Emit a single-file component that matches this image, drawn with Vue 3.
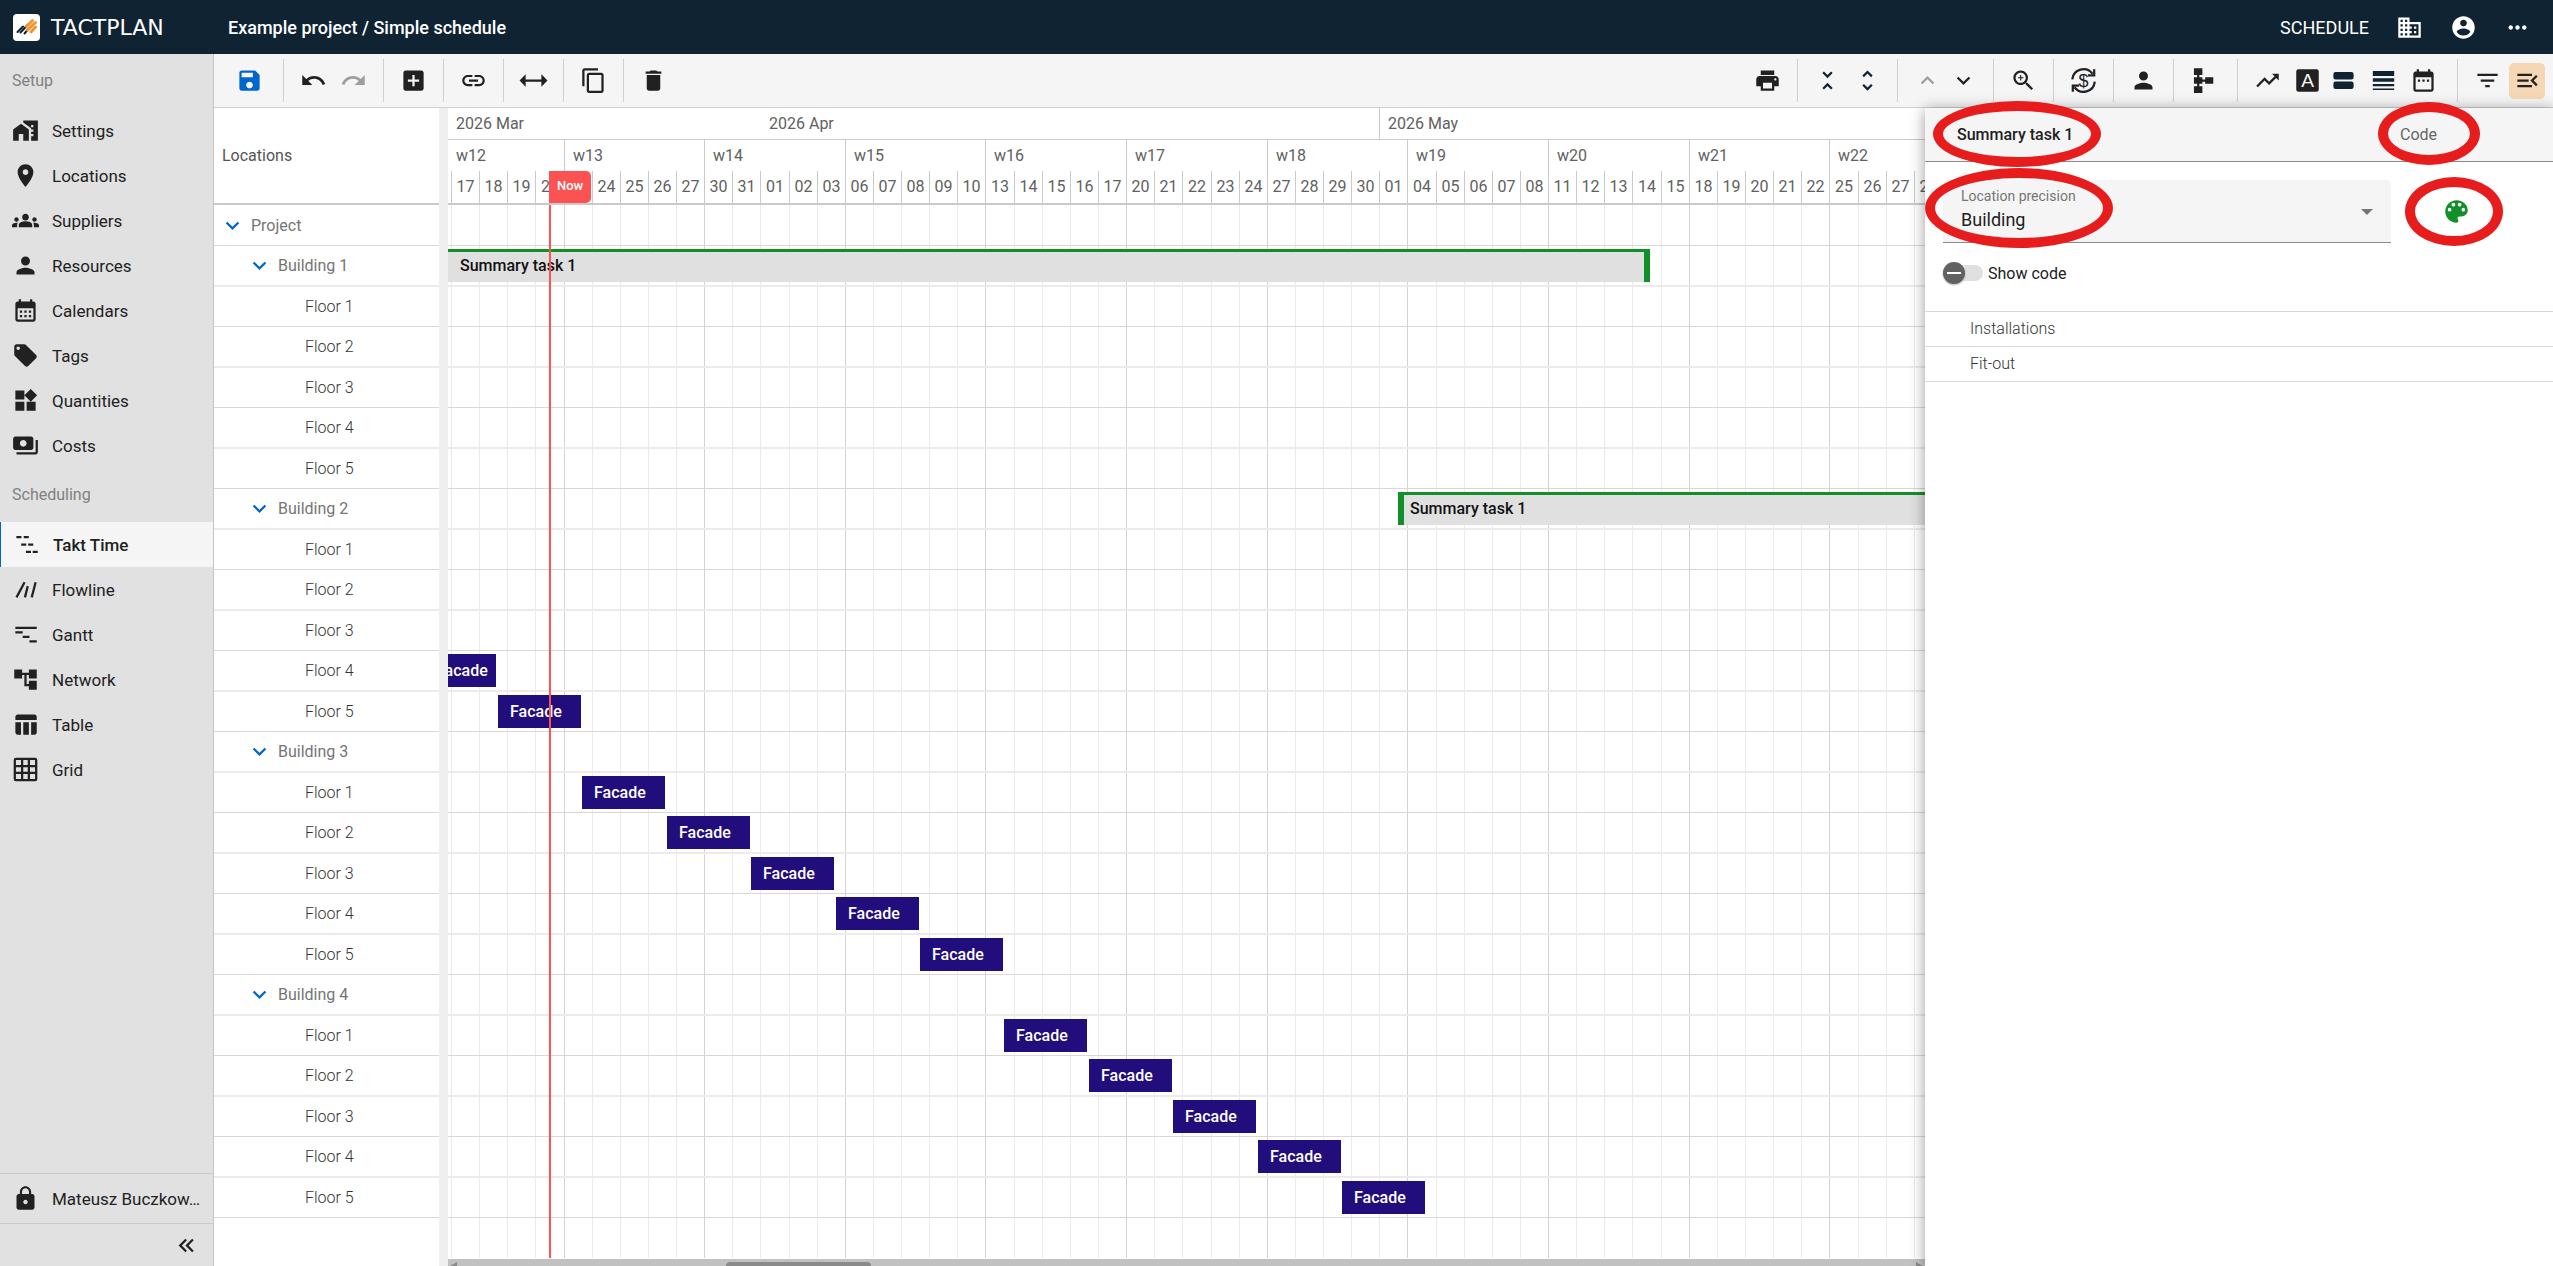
<template>
  <div class="app">
    <header class="topbar">
      <a href="#" class="brand">
        <svg class="brand-mark" viewBox="0 0 27 27" aria-hidden="true">
          <rect width="27" height="27" rx="4" fill="#fff" />
          <g fill="none" stroke-linecap="round" stroke-width="2">
            <path d="M4.5 18L10 12.500M7.500 18.500L15 10.500M11.500 19.500L14.500 16" stroke="#0f2333" />
            <path d="M13.500 12.500L19.500 6.500M14.500 16L22.500 8.500M18 18L22.500 13" stroke="#f2952f" stroke-width="3" />
          </g>
        </svg>
        <span class="brand-name">TACTPLAN</span>
      </a>
      <h1 class="title">Example project / Simple schedule</h1>
      <nav class="top-actions">
        <a href="#" class="schedule-link">SCHEDULE</a>
        <button v-for="name in ['business', 'account', 'dots']" :key="name" class="top-btn" :aria-label="name">
          <svg class="icon" viewBox="0 0 24 24"><path :d="icons[name]" /></svg>
        </button>
      </nav>
    </header>

    <div class="body">
      <aside class="sidebar">
        <nav class="menu">
          <template v-for="section in sections" :key="section.title">
            <h2 class="menu-title">{{ section.title }}</h2>
            <a
              v-for="item in section.items"
              :key="item.label"
              href="#"
              class="menu-item"
              :class="{ active: item.active }"
            >
              <svg class="icon" :class="{ lined: item.lined }" viewBox="0 0 24 24"><path :d="icons[item.icon]" /></svg>
              <span>{{ item.label }}</span>
            </a>
          </template>
        </nav>
        <a href="#" class="user">
          <svg class="icon" viewBox="0 0 24 24"><path :d="icons.lock" /></svg>
          <span class="user-name">Mateusz Buczkow…</span>
        </a>
        <div class="collapse">
          <button class="collapse-btn" aria-label="Collapse menu">
            <svg class="icon" viewBox="0 0 24 24"><path :d="icons.doubleLeft" /></svg>
          </button>
        </div>
      </aside>

      <main class="main">
        <div class="toolbar">
          <div v-for="(side, s) in toolbar" :key="s" class="toolbar-side">
            <div v-for="(group, g) in side" :key="g" class="tool-group" :class="group.kind">
              <button
                v-for="tool in group.tools"
                :key="tool.icon"
                class="tool"
                :class="tool.state"
                :aria-label="tool.icon"
                :disabled="tool.disabled"
              >
                <svg v-if="tool.icon === 'font'" class="icon" viewBox="0 0 24 24">
                  <rect x="2" y="2" width="20" height="20" rx="2" />
                  <text x="12" y="18" class="glyph-a">A</text>
                </svg>
                <svg v-else-if="tool.icon === 'currency'" class="icon" viewBox="0 0 24 24">
                  <path d="M2 11A10 10 0 0 1 20 6M22 13A10 10 0 0 1 4 18" class="arc" />
                  <path d="M22.500 2v6.500H16v-2h4.500V2zM1.500 22v-6.500H8v2H3.500V22z" />
                  <text x="12" y="17.500" class="glyph-s">$</text>
                </svg>
                <svg v-else class="icon" viewBox="0 0 24 24"><path :d="icons[tool.icon]" /></svg>
              </button>
            </div>
          </div>
        </div>

        <div class="workspace">
          <section class="tree">
            <div class="tree-header">Locations</div>
            <div class="rows">
              <div v-for="row in rows" :key="row.id" class="row tree-row" :class="'level-' + row.level">
                <button v-if="row.level < 2" class="toggle" aria-label="Toggle">
                  <svg class="chevron" viewBox="0 0 24 24"><path :d="icons.down" /></svg>
                </button>
                <span>{{ row.name }}</span>
              </div>
            </div>
          </section>

          <div class="splitter"></div>

          <section class="chart">
            <div class="chart-header">
              <div class="scale months">
                <span
                  v-for="m in months"
                  :key="m.label"
                  class="month"
                  :class="{ open: m.open }"
                  :style="{ width: m.width + 'px' }"
                >{{ m.label }}</span>
              </div>
              <div class="scale weeks">
                <span v-for="w in weeks" :key="w.label" class="week" :style="{ width: w.width + 'px' }">{{ w.label }}</span>
              </div>
              <div class="scale days">
                <span v-for="d in days" :key="d.index" class="day" :style="{ width: d.width + 'px' }">{{ d.label }}</span>
              </div>
              <span class="now" :style="{ left: nowX + 'px' }">Now</span>
            </div>

            <div class="chart-body">
              <div class="columns">
                <span
                  v-for="d in days"
                  :key="d.index"
                  class="column"
                  :class="{ 'week-end': d.weekEnd }"
                  :style="{ width: d.width + 'px' }"
                ></span>
              </div>
              <div class="rows">
                <div v-for="row in rows" :key="row.id" class="row">
                  <div
                    v-if="row.bar"
                    class="bar"
                    :class="row.bar.kind"
                    :style="{ left: row.bar.left + 'px', width: row.bar.width + 'px' }"
                  >{{ row.bar.label }}</div>
                </div>
              </div>
              <div class="now-line" :style="{ left: nowX + 'px' }"></div>
            </div>

            <div class="scrollbar">
              <span class="arrow-left"></span>
              <div class="scroll-track"><div class="thumb"></div></div>
              <span class="arrow-right"></span>
            </div>
          </section>

          <aside class="panel">
            <div class="panel-header">
              <input v-model="taskName" class="name-input" aria-label="Name" />
              <input v-model="code" class="code-input" placeholder="Code" aria-label="Code" />
            </div>
            <div class="panel-fields">
              <div class="select-field">
                <label for="precision">Location precision</label>
                <select id="precision" v-model="precision">
                  <option>Project</option>
                  <option>Building</option>
                  <option>Floor</option>
                </select>
              </div>
              <button class="palette" aria-label="Color">
                <svg class="icon" viewBox="0 0 24 24"><path :d="icons.palette" /></svg>
              </button>
            </div>
            <label class="switch" for="show-code">
              <input id="show-code" v-model="showCode" type="checkbox" />
              <span>Show code</span>
            </label>
            <ul class="subtasks">
              <li v-for="task in subtasks" :key="task">{{ task }}</li>
            </ul>
            <span class="mark mark-name"></span>
            <span class="mark mark-code"></span>
            <span class="mark mark-precision"></span>
            <span class="mark mark-palette"></span>
          </aside>
        </div>
      </main>
    </div>
  </div>
</template>

<script setup>
import { ref } from 'vue'

const taskName = ref('Summary task 1')
const code = ref('')
const precision = ref('Building')
const showCode = ref(false)
const subtasks = ['Installations', 'Fit-out']

const icons = {
  business: 'M12 7V3H2v18h20V7H12zM6 19H4v-2h2v2zm0-4H4v-2h2v2zm0-4H4V9h2v2zm0-4H4V5h2v2zm4 12H8v-2h2v2zm0-4H8v-2h2v2zm0-4H8V9h2v2zm0-4H8V5h2v2zm10 12h-8v-2h2v-2h-2v-2h2v-2h-2V9h8v10zm-2-8h-2v2h2v-2zm0 4h-2v2h2v-2z',
  account: 'M12 2C6.48 2 2 6.480 2 12s4.480 10 10 10 10-4.480 10-10S17.520 2 12 2zm0 3c1.660 0 3 1.340 3 3s-1.340 3-3 3-3-1.340-3-3 1.340-3 3-3zm0 14.200c-2.500 0-4.710-1.280-6-3.220.03-1.990 4-3.080 6-3.080 1.990 0 5.970 1.090 6 3.080-1.290 1.940-3.500 3.220-6 3.220z',
  dots: 'M6 10c-1.100 0-2 .9-2 2s.9 2 2 2 2-.9 2-2-.9-2-2-2zm12 0c-1.100 0-2 .9-2 2s.9 2 2 2 2-.9 2-2-.9-2-2-2zm-6 0c-1.100 0-2 .9-2 2s.9 2 2 2 2-.9 2-2-.9-2-2-2z',
  settings: 'M1 11v10h5v-6h4v6h5V11L8 6zM10 3v1.970l7 5V11h2v2h-2v2h2v2h-2v4h6V3H10zm9 6h-2V7h2v2z',
  place: 'M12 2C8.130 2 5 5.130 5 9c0 5.250 7 13 7 13s7-7.750 7-13c0-3.870-3.130-7-7-7zm0 9.500c-1.380 0-2.500-1.120-2.500-2.500s1.120-2.500 2.500-2.500 2.500 1.120 2.500 2.500-1.120 2.500-2.500 2.500z',
  groups: 'M12 12.750c1.630 0 3.070.39 4.240.9 1.080.48 1.760 1.560 1.760 2.730V18H6v-1.610c0-1.180.68-2.260 1.760-2.730 1.170-.52 2.610-.91 4.240-.91zM4 13c1.100 0 2-.9 2-2s-.9-2-2-2-2 .9-2 2 .9 2 2 2zm1.130 1.100c-.37-.06-.74-.1-1.130-.1-.99 0-1.930.21-2.780.58C.48 14.900 0 15.620 0 16.430V18h4.500v-1.610c0-.83.23-1.610.63-2.290zM20 13c1.100 0 2-.9 2-2s-.9-2-2-2-2 .9-2 2 .9 2 2 2zm4 3.430c0-.81-.48-1.530-1.220-1.850-.85-.37-1.790-.58-2.780-.58-.39 0-.76.04-1.130.1.4.68.63 1.460.63 2.290V18H24v-1.570zM12 6c1.660 0 3 1.340 3 3s-1.340 3-3 3-3-1.340-3-3 1.340-3 3-3z',
  person: 'M12 12c2.210 0 4-1.790 4-4s-1.790-4-4-4-4 1.790-4 4 1.790 4 4 4zm0 2c-2.670 0-8 1.340-8 4v2h16v-2c0-2.660-5.330-4-8-4z',
  calendar: 'M19 4h-1V2h-2v2H8V2H6v2H5c-1.110 0-1.990.9-1.990 2L3 20c0 1.100.89 2 2 2h14c1.100 0 2-.9 2-2V6c0-1.100-.9-2-2-2zm0 16H5V10h14v10zM9 14H7v-2h2v2zm4 0h-2v-2h2v2zm4 0h-2v-2h2v2zm-8 4H7v-2h2v2zm4 0h-2v-2h2v2zm4 0h-2v-2h2v2z',
  tag: 'M21.410 11.580l-9-9C12.050 2.220 11.550 2 11 2H4c-1.100 0-2 .9-2 2v7c0 .55.22 1.050.59 1.420l9 9c.36.36.86.58 1.410.58s1.050-.22 1.410-.59l7-7c.37-.36.59-.86.59-1.410s-.23-1.060-.59-1.420zM5.500 7C4.670 7 4 6.330 4 5.500S4.670 4 5.500 4 7 4.670 7 5.500 6.330 7 5.500 7z',
  widgets: 'M13 13v8h8v-8h-8zM3 21h8v-8H3v8zM3 3v8h8V3H3zm13.660-1.310L11 7.340 16.660 13l5.660-5.660-5.660-5.650z',
  payments: 'M19 14V6c0-1.100-.9-2-2-2H3c-1.100 0-2 .9-2 2v8c0 1.100.9 2 2 2h14c1.100 0 2-.9 2-2zm-9-1c-1.660 0-3-1.340-3-3s1.340-3 3-3 3 1.340 3 3-1.340 3-3 3zm13-6v11c0 1.100-.9 2-2 2H4v-2h17V7h2z',
  takt: 'M3 5.500h4.500M9.500 5.500h4.500M7.300 12h4.500M13.500 12h4.500M11.500 18.500h4.500M17.500 18.500h4.500',
  flowline: 'M4 19L11.200 5.500M11.500 19L14 9M17.500 19L21 5.500',
  gantt: 'M3 6h19M3 10h6.500M9.500 14h6M15.500 18h6.500',
  network: 'M22 11V3h-7v3H9V3H2v8h7V8h2v10h4v3h7v-8h-7v3h-2V8h2v3z',
  table: 'M10 10h5v11h-5zM17 21h3c1.100 0 2-.9 2-2v-9h-5v11zm3-18H5c-1.100 0-2 .9-2 2v3h19V5c0-1.100-.9-2-2-2zM3 19c0 1.100.9 2 2 2h3V10H3v9z',
  grid: 'M3.500 2.500h17q1 0 1 1v17q0 1-1 1h-17q-1 0-1-1v-17q0-1 1-1zM2.500 9h19M2.500 15h19M9 2.500v19M15 2.500v19',
  lock: 'M18 8h-1V6c0-2.760-2.240-5-5-5S7 3.240 7 6v2H6c-1.100 0-2 .9-2 2v10c0 1.100.9 2 2 2h12c1.100 0 2-.9 2-2V10c0-1.100-.9-2-2-2zm-6 9c-1.100 0-2-.9-2-2s.9-2 2-2 2 .9 2 2-.9 2-2 2zm3.100-9H8.900V6c0-1.710 1.390-3.100 3.100-3.100 1.710 0 3.100 1.390 3.100 3.100v2z',
  doubleLeft: 'M18.410 7.410L17 6l-6 6 6 6 1.410-1.410L13.830 12zM12.410 7.410L11 6l-6 6 6 6 1.410-1.410L7.830 12z',
  save: 'M17 3H5c-1.110 0-2 .9-2 2v14c0 1.100.89 2 2 2h14c1.100 0 2-.9 2-2V7l-4-4zm-5 16c-1.660 0-3-1.340-3-3s1.340-3 3-3 3 1.340 3 3-1.340 3-3 3zm3-10H5V5h10v4z',
  undo: 'M12.500 8c-2.650 0-5.050.99-6.900 2.600L2 7v9h9l-3.620-3.620c1.390-1.160 3.160-1.880 5.120-1.880 3.540 0 6.550 2.310 7.600 5.500l2.370-.78C21.080 11.030 17.150 8 12.500 8z',
  redo: 'M18.400 10.600C16.550 8.990 14.150 8 11.500 8c-4.650 0-8.580 3.030-9.960 7.220L3.900 16c1.050-3.190 4.050-5.500 7.600-5.500 1.950 0 3.730.72 5.120 1.880L13 16h9V7l-3.600 3.600z',
  add: 'M19 3H5c-1.110 0-2 .9-2 2v14c0 1.100.89 2 2 2h14c1.100 0 2-.9 2-2V5c0-1.100-.9-2-2-2zm-2 10h-4v4h-2v-4H7v-2h4V7h2v4h4v2z',
  link: 'M3.900 12c0-1.710 1.390-3.100 3.100-3.100h4V7H7c-2.760 0-5 2.240-5 5s2.240 5 5 5h4v-1.900H7c-1.710 0-3.100-1.390-3.100-3.100zM8 13h8v-2H8v2zm9-6h-4v1.900h4c1.710 0 3.100 1.390 3.100 3.100s-1.390 3.100-3.100 3.100h-4V17h4c2.760 0 5-2.240 5-5s-2.240-5-5-5z',
  stretch: 'M-.4 12L5 6.500V11h14V6.500l5.400 5.500L19 17.500V13H5v4.500z',
  copy: 'M16 1H4c-1.100 0-2 .9-2 2v14h2V3h12V1zm3 4H8c-1.100 0-2 .9-2 2v14c0 1.100.9 2 2 2h11c1.100 0 2-.9 2-2V7c0-1.100-.9-2-2-2zm0 16H8V7h11v14z',
  delete: 'M6 19c0 1.100.9 2 2 2h8c1.100 0 2-.9 2-2V7H6v12zM19 4h-3.500l-1-1h-5l-1 1H5v2h14V4z',
  print: 'M19 8H5c-1.660 0-3 1.340-3 3v6h4v4h12v-4h4v-6c0-1.660-1.340-3-3-3zm-3 11H8v-5h8v5zm3-7c-.55 0-1-.45-1-1s.45-1 1-1 1 .45 1 1-.45 1-1 1zm-1-9H6v4h12V3z',
  fold: 'M7.410 18.590L8.830 20 12 16.830 15.170 20l1.410-1.410L12 14l-4.590 4.590zm9.180-13.180L15.170 4 12 7.170 8.830 4 7.410 5.410 12 10l4.590-4.590z',
  unfold: 'M12 5.830L15.170 9l1.410-1.410L12 3 7.410 7.590 8.830 9 12 5.830zm0 12.340L8.830 15l-1.410 1.410L12 21l4.590-4.590L15.170 15 12 18.170z',
  up: 'M12 8l-6 6 1.410 1.410L12 10.830l4.590 4.580L18 14z',
  down: 'M16.590 8.590L12 13.170 7.410 8.590 6 10l6 6 6-6z',
  zoom: 'M15.500 14h-.79l-.28-.27C15.410 12.590 16 11.110 16 9.500 16 5.910 13.090 3 9.500 3S3 5.910 3 9.500 5.910 16 9.500 16c1.610 0 3.090-.59 4.230-1.570l.27.28v.79l5 4.990L20.490 19l-4.990-5zm-6 0C7.010 14 5 11.990 5 9.500S7.010 5 9.500 5 14 7.010 14 9.500 11.990 14 9.500 14zm2.500-4h-2v2H9v-2H7V9h2V7h1v2h2v1z',
  schema: 'M3.500 1H11v6.200H8.300V9.200H11V11h2.500V9.200h7.200v5.600h-7.200V13H11v1.800H8.300V17H11v6H3.500v-6h2.800v-2.200H3.500V9.200h2.800v-2H3.500z',
  trend: 'M16 6l2.290 2.290-4.880 4.880-4-4L2 16.590 3.410 18l6-6 4 4 6.300-6.290L22 12V6z',
  agenda: 'M5 4.500h14q2 0 2 2v2.700q0 2-2 2H5q-2 0-2-2V6.500q0-2 2-2zM5 12.800h14q2 0 2 2v2.700q0 2-2 2H5q-2 0-2-2v-2.700q0-2 2-2z',
  lines: 'M2.500 3.500h19v4.500h-19zM2.500 10h19v3h-19zM2.500 15h19v2h-19zM2.500 19h19v1.500h-19z',
  date: 'M9 11H7v2h2v-2zm4 0h-2v2h2v-2zm4 0h-2v2h2v-2zm2-7h-1V2h-2v2H8V2H6v2H5c-1.110 0-1.990.9-1.990 2L3 20c0 1.100.89 2 2 2h14c1.100 0 2-.9 2-2V6c0-1.100-.9-2-2-2zm0 16H5V9h14v11z',
  filter: 'M10 18h4v-2h-4v2zM3 6v2h18V6H3zm3 7h12v-2H6v2z',
  menuOpen: 'M3 18h13v-2H3v2zm0-5h10v-2H3v2zm0-7v2h13V6H3zm18 9.590L17.420 12 21 8.410 19.590 7l-5 5 5 5L21 15.590z',
  palette: 'M12 2C6.500 2 2 6.500 2 12s4.500 10 10 10c.9 0 1.700-.7 1.700-1.700 0-.4-.2-.8-.4-1.100-.3-.3-.4-.7-.4-1.100 0-.9.7-1.700 1.600-1.700h2c3 0 5.500-2.500 5.500-5.500C22 6 17.500 2 12 2zm-6.100 10c-.9 0-1.600-.7-1.600-1.600s.7-1.700 1.600-1.700 1.600.8 1.600 1.700S6.800 12 5.900 12zm3.300-4.400c-.9 0-1.600-.8-1.600-1.700s.7-1.600 1.600-1.600 1.700.7 1.700 1.600-.8 1.700-1.700 1.700zm5.600 0c-.9 0-1.700-.8-1.700-1.700s.8-1.600 1.700-1.600 1.600.7 1.600 1.600-.7 1.700-1.600 1.700zm3.300 4.400c-.9 0-1.600-.7-1.600-1.600s.7-1.700 1.600-1.700 1.600.8 1.600 1.700-.7 1.600-1.600 1.600z'
}

const sections = [
  {
    title: 'Setup',
    items: [
      { label: 'Settings', icon: 'settings' },
      { label: 'Locations', icon: 'place' },
      { label: 'Suppliers', icon: 'groups' },
      { label: 'Resources', icon: 'person' },
      { label: 'Calendars', icon: 'calendar' },
      { label: 'Tags', icon: 'tag' },
      { label: 'Quantities', icon: 'widgets' },
      { label: 'Costs', icon: 'payments' }
    ]
  },
  {
    title: 'Scheduling',
    items: [
      { label: 'Takt Time', icon: 'takt', lined: true, active: true },
      { label: 'Flowline', icon: 'flowline', lined: true },
      { label: 'Gantt', icon: 'gantt', lined: true },
      { label: 'Network', icon: 'network' },
      { label: 'Table', icon: 'table' },
      { label: 'Grid', icon: 'grid', lined: true }
    ]
  }
]

const toolbar = [
  [
    { kind: 'first', tools: [{ icon: 'save', state: 'primary' }] },
    { tools: [{ icon: 'undo' }, { icon: 'redo', disabled: true }] },
    { tools: [{ icon: 'add' }] },
    { tools: [{ icon: 'link' }] },
    { tools: [{ icon: 'stretch' }] },
    { tools: [{ icon: 'copy' }] },
    { kind: 'last', tools: [{ icon: 'delete' }] }
  ],
  [
    { tools: [{ icon: 'print' }] },
    { tools: [{ icon: 'fold', state: 'navy' }, { icon: 'unfold', state: 'navy' }] },
    { tools: [{ icon: 'up', state: 'tight', disabled: true }, { icon: 'down' }] },
    { tools: [{ icon: 'zoom' }] },
    { tools: [{ icon: 'currency' }] },
    { tools: [{ icon: 'person' }] },
    { kind: 'wide', tools: [{ icon: 'schema' }] },
    {
      kind: 'wide',
      tools: [
        { icon: 'trend' },
        { icon: 'font', state: 'tight' },
        { icon: 'agenda', state: 'navy' },
        { icon: 'lines', state: 'navy' },
        { icon: 'date' }
      ]
    },
    { kind: 'last', tools: [{ icon: 'filter' }, { icon: 'menuOpen', state: 'selected' }] }
  ]
]

// working days only, the view is scrolled to just before 17 March
const DAY = 28.13
const edge = (n) => Math.round(4 + n * DAY)

const days = [{ index: 0, label: '', width: edge(0), weekEnd: false }]
const date = new Date(2026, 2, 17)
while (days.length < 54) {
  const n = days.length
  const weekday = date.getDay()
  if (weekday > 0 && weekday < 6) {
    days.push({
      index: n,
      label: String(date.getDate()).padStart(2, '0'),
      width: edge(n) - edge(n - 1),
      weekEnd: weekday === 5
    })
  }
  date.setDate(date.getDate() + 1)
}

const weeks = Array.from({ length: 11 }, (_, i) => ({
  label: 'w' + (12 + i),
  width: i === 0 ? edge(4) : edge(4 + i * 5) - edge(i * 5 - 1)
}))

const months = [
  { label: '2026 Mar', width: edge(11), open: true },
  { label: '2026 Apr', width: edge(33) - edge(11) },
  { label: '2026 May', width: edge(55) - edge(33) }
]

const nowX = 101

// each floor takes three days, the first visible bar is a shorter one
const facade = (step) => ({
  kind: 'task',
  label: 'Facade',
  left: step < 0 ? -24 : Math.round(50 + step * 3 * DAY),
  width: step < 0 ? 72 : 83
})

const rows = [{ id: 'project', name: 'Project', level: 0 }]
for (let b = 1; b <= 4; b++) {
  const building = { id: 'b' + b, name: 'Building ' + b, level: 1 }
  if (b === 1) building.bar = { kind: 'summary ends', label: 'Summary task 1', left: 0, width: 1202 }
  if (b === 2) building.bar = { kind: 'summary starts', label: 'Summary task 1', left: 950, width: 900 }
  rows.push(building)
  for (let f = 1; f <= 5; f++) {
    const step = (b - 3) * 5 + f
    const row = { id: 'b' + b + 'f' + f, name: 'Floor ' + f, level: 2 }
    if (step >= -1) row.bar = facade(step)
    rows.push(row)
  }
}
</script>

<style>
body {
  margin: 0;
}
</style>

<style scoped>
.app {
  display: flex;
  flex-direction: column;
  height: 100vh;
  overflow: hidden;
  background: #fff;
  color: #212121;
  font-family: Roboto, sans-serif;
  font-size: 16px;
}

.app * {
  box-sizing: border-box;
}

button {
  display: flex;
  align-items: center;
  justify-content: center;
  padding: 0;
  border: none;
  background: none;
  color: inherit;
  cursor: pointer;
}

a {
  color: inherit;
  text-decoration: none;
}

.icon {
  flex: none;
  width: 27px;
  height: 27px;
  fill: currentColor;
  overflow: visible;
}

.icon.lined {
  fill: none;
  stroke: currentColor;
  stroke-width: 2;
}

/* top bar */
.topbar {
  display: flex;
  align-items: center;
  height: 54px;
  flex: none;
  padding: 0 9px 0 13px;
  background: #0f2333;
  color: #fff;
}

.brand {
  display: flex;
  align-items: center;
  gap: 11px;
  width: 215px;
}

.brand-mark {
  width: 27px;
  height: 27px;
}

.brand-name {
  font-family: "DejaVu Sans", sans-serif;
  font-size: 22px;
}

.title {
  flex: 1;
  margin: 0;
  font-size: 18px;
  font-weight: 500;
}

.top-actions {
  display: flex;
  align-items: center;
}

.schedule-link {
  margin-right: 13px;
  font-size: 18px;
}

.top-btn {
  width: 54px;
  height: 54px;
}

.body {
  display: flex;
  flex: 1;
  min-height: 0;
}

/* sidebar */
.sidebar {
  display: flex;
  flex-direction: column;
  flex: none;
  width: 214px;
  border-right: 1px solid #c4c4c4;
  background: #e1e1e1;
}

.menu {
  flex: 1;
}

.menu-title {
  margin: 0;
  padding-left: 12px;
  color: #808080;
  font-size: 16px;
  font-weight: 400;
  line-height: 54px;
}

.menu-item,
.user {
  display: flex;
  align-items: center;
  gap: 13px;
  height: 45px;
  padding: 0 12px;
}

.menu-item {
  font-size: 17px;
}

.menu-item.active {
  border-left: 1px solid #0066cc;
  background: #f5f5f5;
  font-weight: 500;
}

.user {
  height: 51px;
  padding-right: 4px;
  border-top: 1px solid #cacaca;
  border-bottom: 1px solid #cacaca;
  font-size: 17px;
}

.user-name {
  white-space: nowrap;
}

.collapse {
  display: flex;
  justify-content: flex-end;
  align-items: center;
  height: 42px;
  padding-right: 13px;
}

/* toolbar */
.main {
  display: flex;
  flex-direction: column;
  flex: 1;
  min-width: 0;
}

.toolbar {
  display: flex;
  justify-content: space-between;
  flex: none;
  height: 54px;
  padding: 5px 6px;
  border-bottom: 1px solid #d0d0d0;
  background: #f5f5f5;
}

.toolbar-side {
  display: flex;
}

.tool-group {
  display: flex;
  align-items: center;
  padding: 0 10px 0 9px;
  border-right: 1px solid #d0d0d0;
}

.tool-group.first {
  padding-right: 14px;
}

.tool-group.wide {
  padding-right: 14px;
}

.tool-group.last {
  padding-right: 0;
  border-right: none;
}

.tool {
  width: 36px;
  height: 36px;
  margin: 0 2px;
  border-radius: 5px;
}

.tool.primary {
  color: #0066cc;
}

.tool.navy {
  color: #0f2333;
}

.tool.tight {
  margin-right: -2px;
}

.tool.selected {
  background: #f6d7b5;
}

.tool:disabled {
  color: #9e9e9e;
}

.glyph-a {
  fill: #f5f5f5;
  font-size: 17px;
  font-weight: 500;
  text-anchor: middle;
}

.glyph-s {
  font-size: 16px;
  font-weight: 500;
  text-anchor: middle;
}

.arc {
  fill: none;
  stroke: currentColor;
  stroke-width: 2;
}

/* location tree */
.workspace {
  display: flex;
  flex: 1;
  min-height: 0;
}

.tree {
  flex: none;
  width: 225px;
}

.tree-header {
  height: 97px;
  padding-left: 8px;
  border-bottom: 2px solid #cacaca;
  color: #555;
  line-height: 95px;
}

.rows {
  padding-top: 1px;
}

.row {
  position: relative;
  height: 40px;
  border-bottom: 1px solid #d8d8d8;
}

.row:nth-child(even) {
  height: 41px;
  border-bottom: 2px solid #ebebeb;
}

.tree-row {
  display: flex;
  align-items: center;
  gap: 5px;
  color: #757575;
}

.level-0 {
  padding-left: 5px;
}

.level-1 {
  padding-left: 32px;
}

.level-2 {
  padding-left: 91px;
  color: #333;
  font-weight: 300;
}

.toggle {
  width: 27px;
  height: 27px;
}

.chevron {
  width: 27px;
  height: 27px;
  fill: #0066cc;
}

.splitter {
  flex: none;
  width: 9px;
  background: #efefef;
}

/* chart */
.chart {
  display: flex;
  flex-direction: column;
  flex: 1;
  min-width: 0;
  overflow: hidden;
}

.chart-header {
  position: relative;
  flex: none;
  border-bottom: 2px solid #cacaca;
  color: #616161;
}

.scale {
  display: flex;
  height: 32px;
  line-height: 32px;
}

.scale span {
  flex: none;
}

.months {
  border-bottom: 1px solid #cacaca;
}

.month,
.week {
  padding-left: 8px;
  border-right: 1px solid #cacaca;
}

.month.open {
  border-right: none;
}

.weeks {
  height: 31px;
}

.day {
  border-right: 1px solid #cacaca;
  text-align: center;
}

.now {
  position: absolute;
  bottom: 0;
  height: 32px;
  padding: 0 8px;
  border-radius: 0 5px 5px 0;
  background: #fc5252;
  color: #fff;
  font-size: 13px;
  font-weight: 500;
  line-height: 30px;
}

.chart-body {
  position: relative;
  flex: 1;
  min-height: 0;
}

.columns {
  position: absolute;
  inset: 0;
  display: flex;
}

.column {
  flex: none;
  border-right: 1px solid #ebebeb;
}

.column.week-end {
  border-right-color: #d4d4d4;
}

.bar {
  position: absolute;
  top: 3px;
  height: 33px;
  line-height: 33px;
  font-weight: 500;
  white-space: nowrap;
}

.bar.task {
  padding-left: 12px;
  background: #220d7c;
  color: #fff;
}

.bar.summary {
  padding-left: 12px;
  border-top: 3px solid #11902a;
  background: #e0e0e0;
  color: #111;
  line-height: 27px;
}

.bar.ends {
  border-right: 6px solid #11902a;
}

.bar.starts {
  padding-left: 6px;
  border-left: 6px solid #11902a;
}

.now-line {
  position: absolute;
  top: 0;
  bottom: 0;
  width: 2px;
  background: #fc5252;
}

.scrollbar {
  display: flex;
  flex: none;
  gap: 4px;
  height: 8px;
  border-top: 1px solid #fff;
  background: #c1c1c1;
}

.scroll-track {
  display: flex;
  flex: 1;
  padding-left: 5px;
}

.thumb {
  width: 10%;
  margin: 3px 0 0 18%;
  border-radius: 5px 5px 0 0;
  background: #8b8b8b;
}

.arrow-left,
.arrow-right {
  margin-top: 3px;
  border-top: 4px solid transparent;
}

.arrow-left {
  margin-left: 2px;
  border-right: 7px solid #8b8b8b;
}

.arrow-right {
  margin-right: 2px;
  border-left: 7px solid #8b8b8b;
}

/* details panel */
.panel {
  position: relative;
  z-index: 1;
  flex: none;
  width: 628px;
  background: #fff;
  box-shadow: 0 2px 14px rgba(0, 0, 0, 0.4);
}

.panel-header {
  display: flex;
  height: 54px;
  border-bottom: 1px solid #8a8a8a;
  background: #f5f5f5;
}

.panel-header input {
  padding: 0;
  border: none;
  background: none;
  color: #212121;
  font: inherit;
}

.panel-header .name-input {
  flex: 1;
  padding-left: 32px;
  font-weight: 500;
}

.panel-header .code-input {
  width: 153px;
}

.code-input::placeholder {
  color: #666;
}

.panel-fields {
  display: flex;
  align-items: center;
  gap: 45px;
  padding: 18px 76px 0 18px;
}

.select-field {
  position: relative;
  flex: 1;
}

.select-field label {
  position: absolute;
  top: 8px;
  left: 18px;
  color: #757575;
  font-size: 14px;
}

.select-field::after {
  content: "";
  position: absolute;
  top: 29px;
  right: 18px;
  border: 6px solid transparent;
  border-top-color: #757575;
  border-bottom: none;
  pointer-events: none;
}

.select-field select {
  width: 100%;
  height: 63px;
  padding: 17px 18px 0;
  border: none;
  border-bottom: 1px solid #8a8a8a;
  border-radius: 5px 5px 0 0;
  appearance: none;
  background: #f5f5f5;
  color: #212121;
  font-family: inherit;
  font-size: 18px;
}

.palette {
  width: 41px;
  height: 41px;
  color: #11902a;
}

.switch {
  display: flex;
  align-items: center;
  gap: 5px;
  height: 24px;
  margin: 18px 18px 0;
}

.switch input {
  position: relative;
  width: 40px;
  height: 16px;
  margin: 0;
  border-radius: 8px;
  appearance: none;
  background: #e0e0e0;
}

.switch input::before {
  content: "";
  position: absolute;
  top: -3px;
  left: 0;
  width: 22px;
  height: 22px;
  border-radius: 50%;
  background: linear-gradient(#fff, #fff) center / 14px 2px no-repeat #616161;
  box-shadow: 0 1px 2px rgba(0, 0, 0, 0.3);
}

.subtasks {
  margin: 26px 0 0;
  padding: 0;
  border-top: 1px solid #d8d8d8;
  list-style: none;
}

.subtasks li {
  height: 35px;
  padding-left: 45px;
  border-bottom: 1px solid #d8d8d8;
  color: #333;
  font-weight: 300;
  line-height: 34px;
}

/* red rings drawn over the panel */
.mark {
  position: absolute;
  border: 10px solid #e71d1d;
  border-radius: 50%;
  pointer-events: none;
}

.mark-name {
  top: -7px;
  left: 8px;
  width: 168px;
  height: 66px;
}

.mark-code {
  top: -6px;
  left: 453px;
  width: 102px;
  height: 63px;
}

.mark-precision {
  top: 60px;
  left: 0;
  width: 188px;
  height: 80px;
}

.mark-palette {
  top: 69px;
  left: 480px;
  width: 98px;
  height: 69px;
}
</style>
